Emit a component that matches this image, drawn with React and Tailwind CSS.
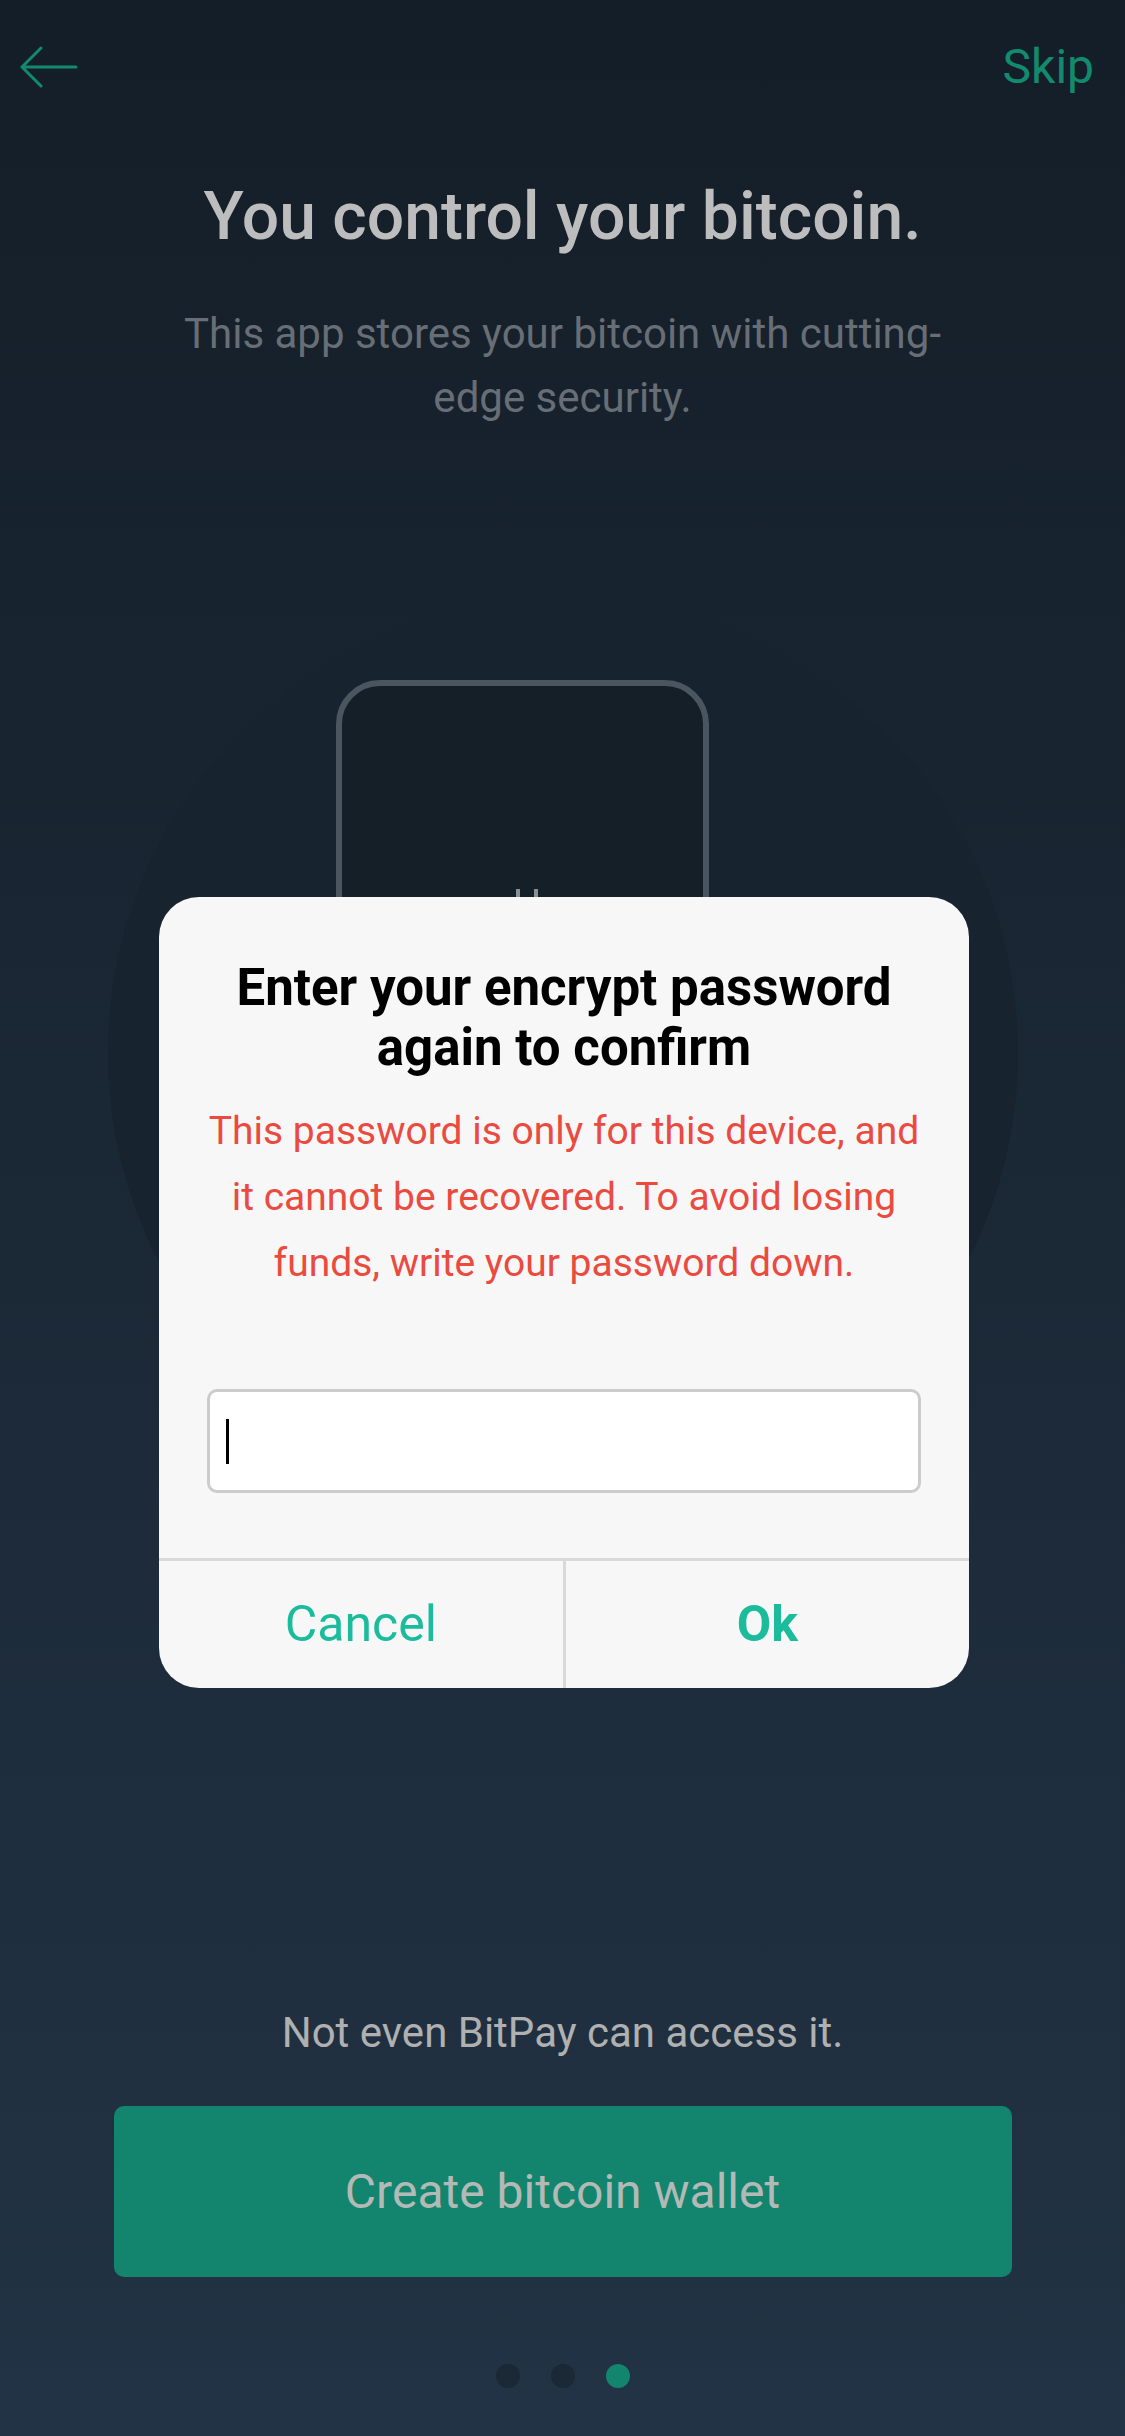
export default function App() {
  return (
    <div className="relative w-[1125px] h-[2436px] overflow-hidden flex flex-col bg-gradient-to-b from-[#141e28] to-[#223345] [font-family:Roboto,'Liberation_Sans',sans-serif]">
      {/* top bar */}
      <div className="flex items-center justify-between h-[56px] mt-[39px] pl-[20px] pr-[31px]">
        <svg width="58" height="44" viewBox="0 0 58 44" fill="none">
          <path d="M2 22H56M21 3L2 22L21 41" stroke="#128a6f" strokeWidth="3" strokeLinecap="round" strokeLinejoin="round" />
        </svg>
        <span className="text-[48px] leading-[56px] text-[#138a6e]">Skip</span>
      </div>

      <h1 className="mt-[82px] text-center text-[66px] leading-[80px] font-medium text-[#bdbdbd]">
        You control your bitcoin.
      </h1>
      <p className="mt-[45px] mx-auto w-[780px] text-center text-[42px] leading-[64px] text-[#686e75]">
        This app stores your bitcoin with cutting-edge security.
      </p>

      {/* illustration */}
      <div className="mt-[168px] mx-auto w-[910px] h-[910px] rounded-full bg-[#17232e] pt-[82px] pl-[228px]">
        <div className="w-[373px] h-[720px] rounded-[44px] border-[6px] border-[#4b5560] bg-[#141f28] flex gap-[14px] pt-[203px] pl-[174px]">
          <div className="w-[4px] h-[40px] bg-[#8a8f94]" />
          <div className="w-[4px] h-[40px] bg-[#8a8f94]" />
        </div>
      </div>

      <div className="flex-1" />

      <div className="flex flex-col items-center pb-[48px]">
        <p className="text-[42px] leading-[56px] text-[#b0b0b0]">Not even BitPay can access it.</p>
        <button className="mt-[45px] w-[898px] h-[171px] rounded-[10px] bg-[#13846d] text-[48px] text-[#b3bab6]">
          Create bitcoin wallet
        </button>
        <div className="mt-[87px] flex gap-[31px]">
          <div className="w-[24px] h-[24px] rounded-full bg-[#1b2835]" />
          <div className="w-[24px] h-[24px] rounded-full bg-[#1b2835]" />
          <div className="w-[24px] h-[24px] rounded-full bg-[#13846d]" />
        </div>
      </div>

      {/* dialog */}
      <div className="absolute top-[897px] left-[159px] w-[810px] rounded-[40px] bg-[#f7f7f7] overflow-hidden flex flex-col">
        <h2 className="pt-[61px] px-[50px] text-center text-[51px] leading-[60px] font-bold text-black">
          Enter your encrypt password again to confirm
        </h2>
        <p className="mt-[20px] px-[44px] text-center text-[39px] leading-[66px] text-[#eb4a3f]">
          This password is only for this device, and it cannot be recovered. To avoid losing funds, write your password down.
        </p>
        <div className="mt-[93px] mx-[48px] h-[104px] rounded-[10px] border-[3px] border-[#cccccc] bg-white flex items-center pl-[16px]">
          <div className="w-[3px] h-[45px] bg-black" />
        </div>
        <div className="mt-[65px] flex border-t-[3px] border-[#d9d9dc] h-[130px]">
          <button className="flex-1 text-[50px] text-[#1bbc9b] border-r-[3px] border-[#d9d9dc]">Cancel</button>
          <button className="flex-1 text-[50px] font-bold text-[#1bbc9b]">Ok</button>
        </div>
      </div>
    </div>
  )
}
